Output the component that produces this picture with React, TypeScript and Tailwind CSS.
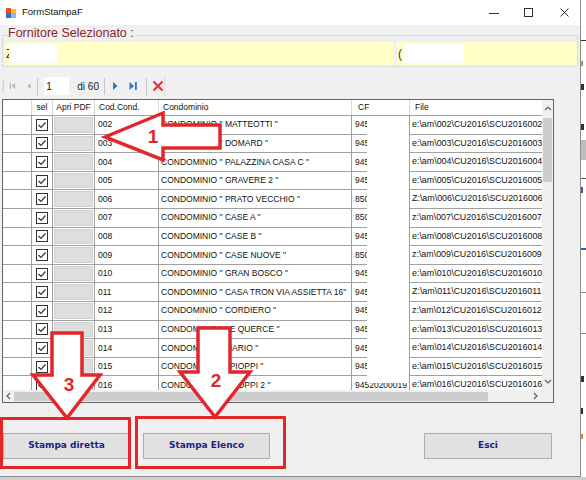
import React from "react";

type Row = [string, string, string, string];

const rows: Row[] = [
  ["002", 'CONDOMINIO " MATTEOTTI "', "945", "e"],
  ["003", 'CONDOMINIO " DOMARD "', "945", "e"],
  ["004", 'CONDOMINIO " PALAZZINA CASA C "', "945", "e"],
  ["005", 'CONDOMINIO " GRAVERE 2 "', "945", "e"],
  ["006", 'CONDOMINIO " PRATO VECCHIO "', "850", "Z"],
  ["007", 'CONDOMINIO " CASE A "', "850", "z"],
  ["008", 'CONDOMINIO " CASE B "', "945", "e"],
  ["009", 'CONDOMINIO " CASE NUOVE "', "850", "z"],
  ["010", 'CONDOMINIO " GRAN BOSCO "', "945", "e"],
  ["011", 'CONDOMINIO " CASA TRON VIA ASSIETTA 16"', "945", "Z"],
  ["012", 'CONDOMINIO " CORDIERO "', "945", "z"],
  ["013", 'CONDOMINIO " LE QUERCE "', "945", "e"],
  ["014", 'CONDOMINIO " MARIO "', "945", "e"],
  ["015", 'CONDOMINIO " I PIOPPI "', "945", "e"],
  ["016", 'CONDOMINIO " I PIOPPI 2 "', "945", "e"],
];

const cols = "grid grid-cols-[29px_21px_42px_64px_193px_58px_150px]";

function Check() {
  return (
    <svg width="12" height="12" viewBox="0 0 12 12">
      <rect x="0.5" y="0.5" width="11" height="11" fill="#fff" stroke="#333" />
      <path d="M2.5 6 L5 8.5 L9.5 3.5" fill="none" stroke="#333" strokeWidth="1.2" />
    </svg>
  );
}

function Chevron({ dir }: { dir: "up" | "down" | "left" | "right" }) {
  const d = {
    up: "M1 5 L4 2 L7 5",
    down: "M1 2 L4 5 L7 2",
    left: "M5 1 L2 4 L5 7",
    right: "M3 1 L6 4 L3 7",
  }[dir];
  return (
    <svg width="8" height="8" viewBox="0 0 8 8">
      <path d={d} fill="none" stroke="#606060" strokeWidth="1.2" />
    </svg>
  );
}

function Sep() {
  return <div className="h-[17px] w-px bg-[#c6c6c6]" />;
}

function DataGrid() {
  return (
    <div className="mt-[2px] ml-[2px] w-[552px] border border-[#646464] bg-[#f0f0f0]">
      <div className="flex h-[290px]">
        <div className="relative w-[539px] overflow-hidden bg-white text-[8.5px] text-[#111]">
          {/* header */}
          <div className={`${cols} h-[16px] border-b border-[#a0a0a0]`}>
            <div className="border-r border-[#d9d9d9]" />
            <div className="flex items-center justify-center border-r border-[#d9d9d9]">sel</div>
            <div className="flex items-center justify-center border-r border-[#d9d9d9]">Apri PDF</div>
            <div className="flex items-center border-r border-[#d9d9d9] pl-[4px]">Cod.Cond.</div>
            <div className="flex items-center border-r border-[#d9d9d9] pl-[4px]">Condominio</div>
            <div className="flex items-center border-r border-[#d9d9d9] pl-[6px]">CF</div>
            <div className="flex items-center pl-[5px]">File</div>
          </div>
          {rows.map(([cod, name, cf, drive]) => (
            <div key={cod} className={`${cols} h-[18.6px]`}>
              <div className="border-r border-b border-[#a0a0a0]" />
              <div className="flex items-center justify-center border-r border-b border-[#a0a0a0]">
                <Check />
              </div>
              <div className="border-r border-b border-[#a0a0a0] p-[1px]">
                <div className="h-full border border-[#d0d0d0] bg-[#dedede]" />
              </div>
              <div className="flex items-center border-r border-b border-[#a0a0a0] pl-[3px]">{cod}</div>
              <div className="flex items-center overflow-hidden whitespace-nowrap border-r border-b border-[#a0a0a0] pl-[2px]">
                {name}
              </div>
              <div className="flex items-center overflow-hidden whitespace-nowrap border-r border-b border-[#a0a0a0] pl-[3px]">
                {cf}20200019
              </div>
              <div className="flex items-center overflow-hidden whitespace-nowrap border-b border-[#a0a0a0] pl-[2px] text-[8.9px]">
                {`${drive}:\\am\\${cod}\\CU2016\\SCU2016${cod}.pdf`}
              </div>
            </div>
          ))}
          {/* redacted CF column */}
          <div className="absolute left-[364px] top-[16px] h-[267px] w-[42px] bg-white" />
        </div>
        <div className="flex w-[11px] flex-col items-center bg-[#f0f0f0]">
          <div className="flex h-[17px] items-center">
            <Chevron dir="up" />
          </div>
          <div className="mt-[1px] h-[64px] w-[9px] bg-[#cdcdcd]" />
          <div className="mt-auto flex h-[16px] items-center">
            <Chevron dir="down" />
          </div>
        </div>
      </div>
      <div className="flex h-[12px] items-center">
        <div className="flex w-[11px] justify-center">
          <Chevron dir="left" />
        </div>
        <div className="h-[9px] w-[474px] bg-[#cdcdcd]" />
        <div className="ml-auto mr-[14px] flex">
          <Chevron dir="right" />
        </div>
      </div>
    </div>
  );
}

function Toolbar() {
  return (
    <div className="mt-[8px] flex h-[22px] w-[165px] items-center whitespace-nowrap border-r border-[#dcdcdc] text-[9px]">
      <svg width="6" height="16" viewBox="0 0 6 16" className="ml-[2px]">
        {[1, 4, 7, 10, 13].map((y) => (
          <rect key={y} x="1" y={y} width="1.5" height="1.5" fill="#a8a8a8" />
        ))}
      </svg>
      <svg width="10" height="10" viewBox="0 0 10 10" className="ml-[2px]">
        <rect x="1" y="1" width="1.6" height="8" fill="#b4b4b4" />
        <path d="M8 1 L3.5 5 L8 9 Z" fill="#b4b4b4" />
      </svg>
      <svg width="8" height="10" viewBox="0 0 8 10" className="ml-[10px]">
        <path d="M6 1 L2 5 L6 9 Z" fill="#b4b4b4" />
      </svg>
      <div className="ml-[5px]">
        <Sep />
      </div>
      <div className="ml-[6px] flex h-[18px] w-[25px] shrink-0 items-center bg-white pl-[2px] text-[10px] text-[#111]">1</div>
      <span className="ml-[8px] shrink-0 text-[10px] text-[#222]">di 60</span>
      <div className="ml-[5px]">
        <Sep />
      </div>
      <svg width="8" height="10" viewBox="0 0 8 10" className="ml-[6px] shrink-0">
        <path d="M2 1 L6.5 5 L2 9 Z" fill="#2a78d6" />
      </svg>
      <svg width="10" height="10" viewBox="0 0 10 10" className="ml-[9px] shrink-0">
        <path d="M1.5 1 L6 5 L1.5 9 Z" fill="#2a78d6" />
        <rect x="7" y="1" width="1.8" height="8" fill="#2a78d6" />
      </svg>
      <div className="ml-[8px]">
        <Sep />
      </div>
      <svg width="12" height="12" viewBox="0 0 12 12" className="ml-[5px] shrink-0">
        <path d="M1.5 1.5 L10.5 10.5 M10.5 1.5 L1.5 10.5" stroke="#e5362f" strokeWidth="2.2" />
      </svg>
    </div>
  );
}

function WinButton({ label, className }: { label: string; className: string }) {
  return (
    <div
      className={`flex h-[26px] w-[127px] items-center justify-center border border-[#adadad] bg-[#e1e1e1] font-['DejaVu_Sans',Verdana,sans-serif] text-[9px] font-bold text-[#1c1f7d] ${className}`}
    >
      {label}
    </div>
  );
}

export default function App() {
  return (
    <div className="relative flex h-[480px] w-[586px] flex-col overflow-hidden bg-[#d8d8d8] font-['Liberation_Sans',Arial,sans-serif]">
      <div className="flex h-[477px]">
        {/* window */}
        <div className="flex w-[581px] flex-col border-r border-b border-[#8c8c8c] bg-[#f0f0f0]">
          {/* title bar */}
          <div className="flex h-[25px] items-center bg-white">
            <svg width="10" height="10" viewBox="0 0 10 10" className="ml-[6px]">
              <rect x="0" y="0" width="5" height="5" fill="#e8512b" />
              <rect x="5" y="1" width="5" height="4" fill="#f6c02a" />
              <rect x="0" y="5" width="5" height="5" fill="#2d6fd0" />
              <rect x="5" y="5" width="5" height="5" fill="#8fb8e8" />
            </svg>
            <span className="ml-[6px] text-[9.5px] text-[#111]">FormStampaF</span>
            <div className="ml-auto flex items-center pr-[11px]">
              <svg width="10" height="10" viewBox="0 0 10 10">
                <path d="M0 5.5 H10" stroke="#333" strokeWidth="1" />
              </svg>
              <svg width="9" height="9" viewBox="0 0 9 9" className="ml-[25px]">
                <rect x="0.5" y="0.5" width="8" height="8" fill="none" stroke="#333" />
              </svg>
              <svg width="9" height="9" viewBox="0 0 9 9" className="ml-[27px]">
                <path d="M0.5 0.5 L8.5 8.5 M8.5 0.5 L0.5 8.5" stroke="#333" strokeWidth="1" />
              </svg>
            </div>
          </div>

          {/* group box */}
          <div className="mt-[10px] ml-[2px] h-[32px] w-[576px] border border-[#dcdcdc]">
            <div className="-mt-[10px] ml-[5px] w-fit bg-[#f0f0f0] pr-[2px] text-[12.5px] leading-[15px] text-[#8e2424]">
              Fornitore Selezionato :
            </div>
            <div className="mt-[1px] flex gap-[4px] text-[12px] text-[#6b2020]">
              <div className="relative ml-[2px] flex h-[23px] w-[388px] items-center bg-[#ffffc6] pl-[1px]">
                Z
                <div className="absolute left-[4px] top-[2px] h-[19px] w-[48px] bg-white" />
              </div>
              <div className="relative flex h-[23px] w-[180px] items-center bg-[#ffffc6] pl-[1px]">
                (
                <div className="absolute left-[6px] top-[2px] h-[19px] w-[61px] bg-white" />
              </div>
            </div>
          </div>

          <Toolbar />
          <DataGrid />

          <div className="mt-[30px] flex">
            <WinButton label="Stampa diretta" className="ml-[3px]" />
            <WinButton label="Stampa Elenco" className="ml-[13px]" />
            <WinButton label="Esci" className="ml-[154px] w-[128px]" />
          </div>
        </div>
        {/* desktop behind */}
        <div className="flex w-[5px] flex-col bg-white">
          <div className="mt-[40px] h-px bg-[#333]" />
          <div className="mt-[20px] h-[5px] w-[2px] bg-[#d98a2a]" />
          <div className="mt-[18px] h-[6px] w-[3px] bg-[#333]" />
          <div className="mt-[34px] h-[6px] w-[3px] bg-[#333]" />
          <div className="mt-[10px] h-[20px] bg-[#bdbdbd]" />
          <div className="mt-[18px] h-px bg-[#555]" />
          <div className="mt-[8px] h-[6px] w-[2px] bg-[#3a5ab8]" />
          <div className="mt-[55px] h-[2px] bg-[#3a5ab8]" />
          <div className="mt-[42px] h-px bg-[#888]" />
          <div className="mt-[40px] h-px bg-[#888]" />
          <div className="mt-[42px] h-[6px] w-[3px] bg-[#333]" />
          <div className="mt-[26px] h-[6px] w-[2px] bg-[#333]" />
          <div className="mt-[20px] h-[5px] w-[2px] bg-[#d98a2a]" />
        </div>
      </div>
      <div className="h-[3px] bg-[#cfcfcf]" />

      {/* red annotations */}
      <div className="pointer-events-none absolute left-0 top-[417px] h-[52px] w-[131px] border-[3px] border-[#e3262a]" />
      <div className="pointer-events-none absolute left-[135px] top-[416px] h-[53px] w-[151px] border-[3px] border-[#e3262a]" />
      <svg
        className="pointer-events-none absolute left-0 top-0"
        width="586"
        height="480"
        viewBox="0 0 586 480"
      >
        <g fill="#fff" stroke="#e3262a" strokeWidth="3.5" strokeLinejoin="miter">
          <polygon points="105,137 163,113 163,125 220,125 220,148 163,148 163,160" />
          <polygon points="52,333 82,333 82,375 100,375 67,418 33,375 52,375" />
          <polygon points="198,328 230,328 230,372 250,372 215,417 180,372 198,372" />
        </g>
        <g fill="#e3262a" fontFamily="'Liberation Sans', Arial, sans-serif" fontWeight="bold" fontSize="19" textAnchor="middle">
          <text x="153" y="143">1</text>
          <text x="69" y="391">3</text>
          <text x="216" y="387">2</text>
        </g>
      </svg>
    </div>
  );
}
